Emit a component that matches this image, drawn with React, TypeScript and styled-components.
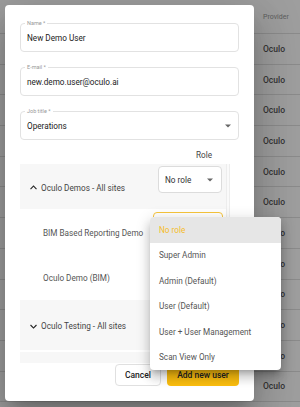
import styled, { createGlobalStyle } from 'styled-components';

const GlobalStyle = createGlobalStyle`
  html, body {
    margin: 0;
    padding: 0;
  }
  body {
    font-family: Roboto, "Liberation Sans", sans-serif;
    width: 300px;
    height: 407px;
    overflow: hidden;
  }
`;

const Screen = styled.div`
  position: relative;
  width: 300px;
  height: 407px;
  overflow: hidden;
  background: #fff;
`;

const TableRow = styled.div<{ $head?: boolean }>`
  height: ${(p) => (p.$head ? 34 : 30.7)}px;
  box-sizing: border-box;
  border-bottom: 1px solid #e0e0e0;
  display: flex;
  align-items: center;
  padding-left: 263px;
  font-size: ${(p) => (p.$head ? 7 : 8.5)}px;
  font-weight: ${(p) => (p.$head ? 400 : 500)};
  color: ${(p) => (p.$head ? '#999' : '#555')};
`;

const Backdrop = styled.div`
  position: absolute;
  inset: 0;
  background: rgba(0, 0, 0, 0.38);
`;

const Dialog = styled.div`
  position: absolute;
  left: 5px;
  top: 5px;
  width: 249px;
  height: 396px;
  box-sizing: border-box;
  background: #fff;
  border-radius: 4px;
  box-shadow: 0 11px 15px -7px rgba(0, 0, 0, 0.2), 0 24px 38px 3px rgba(0, 0, 0, 0.14),
    0 9px 46px 8px rgba(0, 0, 0, 0.12);
  padding: 18px 15px 15px 15px;
  display: flex;
  flex-direction: column;
`;

const Fields = styled.div`
  display: flex;
  flex-direction: column;
  gap: 15px;
`;

const Field = styled.div`
  position: relative;
  height: 29px;
  box-sizing: border-box;
  border: 1px solid #e2e2e2;
  border-radius: 4px;
  display: flex;
  align-items: center;
  justify-content: space-between;
  padding: 0 7px 0 6px;
  font-size: 8.2px;
  color: #222;
`;

const FieldLabel = styled.span`
  position: absolute;
  left: 4px;
  top: -4px;
  padding: 0 2px;
  background: #fff;
  font-size: 5.5px;
  line-height: 7px;
  color: #999;
`;

const RoleHead = styled.div`
  margin-top: 10px;
  height: 14px;
  display: flex;
  align-items: flex-start;
  justify-content: flex-end;
  padding-right: 27px;
  font-size: 8.2px;
  color: #444;
`;

const ScrollArea = styled.div`
  height: 199px;
  display: flex;
  overflow: hidden;
`;

const ScrollContent = styled.div`
  width: 206px;
  display: flex;
  flex-direction: column;
`;

const Scrollbar = styled.div`
  width: 4px;
  box-sizing: border-box;
  border-left: 1px solid #ededed;
  border-right: 1px solid #ededed;
  background: #fafafa;
`;

const GroupHeader = styled.div<{ $h: number; $gap?: number }>`
  height: ${(p) => p.$h}px;
  flex-shrink: 0;
  margin-top: ${(p) => p.$gap ?? 0}px;
  background: #f7f7f7;
  display: flex;
  align-items: flex-start;
  justify-content: space-between;
  padding: 2px 4px 0 9px;
  box-sizing: border-box;
`;

const GroupTitle = styled.div<{ $h: number }>`
  height: ${(p) => p.$h - 2}px;
  display: flex;
  align-items: center;
  gap: 3px;
  font-size: 8.2px;
  color: #444;
`;

const SiteRow = styled.div`
  height: 45px;
  flex-shrink: 0;
  display: flex;
  align-items: flex-start;
  justify-content: space-between;
  padding: 3px 3px 0 23px;
  box-sizing: border-box;
`;

const SiteName = styled.div`
  height: 42px;
  display: flex;
  align-items: center;
  font-size: 8.2px;
  color: #555;
`;

const RoleSelect = styled.div<{ $w: number; $focused?: boolean }>`
  width: ${(p) => p.$w}px;
  height: 27px;
  box-sizing: border-box;
  background: #fff;
  border: ${(p) => (p.$focused ? '1.5px solid #f7c53c' : '1px solid #dcdcdc')};
  border-radius: 4px;
  display: flex;
  align-items: center;
  justify-content: space-between;
  padding: 0 8px 0 6px;
  font-size: 8.2px;
  color: #333;
`;

const Actions = styled.div`
  margin-top: 1px;
  display: flex;
  justify-content: flex-end;
  gap: 6px;
`;

const Button = styled.button<{ $primary?: boolean }>`
  height: 22px;
  width: ${(p) => (p.$primary ? 72 : 46)}px;
  border-radius: 4px;
  border: ${(p) => (p.$primary ? 'none' : '1px solid #e0e0e0')};
  background: ${(p) => (p.$primary ? '#fbbe0f' : '#fff')};
  font-family: inherit;
  font-size: 8.5px;
  font-weight: 500;
  color: #222;
  padding: 0;
`;

const Menu = styled.div`
  position: absolute;
  left: 150px;
  top: 217px;
  width: 131px;
  background: #fff;
  border-radius: 4px;
  box-shadow: 0 5px 5px -3px rgba(0, 0, 0, 0.2), 0 8px 10px 1px rgba(0, 0, 0, 0.14),
    0 3px 14px 2px rgba(0, 0, 0, 0.12);
  overflow: hidden;
`;

const MenuItem = styled.div<{ $selected?: boolean }>`
  height: 25.5px;
  display: flex;
  align-items: center;
  padding-left: 9px;
  font-size: 8.2px;
  background: ${(p) => (p.$selected ? '#e6e6e6' : 'transparent')};
  color: ${(p) => (p.$selected ? '#f5bd2a' : '#555')};
`;

const ArrowDown = () => (
  <svg width="6" height="4" viewBox="7 10 10 5">
    <path d="M7 10l5 5 5-5z" fill="#666" />
  </svg>
);

const Chevron = ({ up }: { up?: boolean }) => (
  <svg width="9" height="9" viewBox="4 4 16 16">
    <path
      d={up ? 'M12 8l-6 6 1.41 1.41L12 10.83l4.59 4.58L18 14z' : 'M16.59 8.59L12 13.17 7.41 8.59 6 10l6 6 6-6z'}
      fill="#222"
    />
  </svg>
);

const providers = Array.from({ length: 12 }, () => 'Oculo');
const roles = ['No role', 'Super Admin', 'Admin (Default)', 'User (Default)', 'User + User Management', 'Scan View Only'];

export default function App() {
  return (
    <Screen>
      <GlobalStyle />
      <TableRow $head>Provider</TableRow>
      {providers.map((p, i) => (
        <TableRow key={i}>{p}</TableRow>
      ))}
      <Backdrop />
      <Dialog>
        <Fields>
          <Field>
            <FieldLabel>Name *</FieldLabel>
            New Demo User
          </Field>
          <Field>
            <FieldLabel>E-mail *</FieldLabel>
            new.demo.user@oculo.ai
          </Field>
          <Field>
            <FieldLabel>Job title *</FieldLabel>
            Operations
            <ArrowDown />
          </Field>
        </Fields>
        <RoleHead>Role</RoleHead>
        <ScrollArea>
          <ScrollContent>
            <GroupHeader $h={45}>
              <GroupTitle $h={45}>
                <Chevron up />
                Oculo Demos - All sites
              </GroupTitle>
              <RoleSelect $w={64}>
                No role
                <ArrowDown />
              </RoleSelect>
            </GroupHeader>
            <SiteRow>
              <SiteName>BIM Based Reporting Demo</SiteName>
              {/* the open menu lies over this select */}
              <RoleSelect $w={70} $focused />
            </SiteRow>
            <SiteRow>
              <SiteName>Oculo Demo (BIM)</SiteName>
              <RoleSelect $w={70} />
            </SiteRow>
            <GroupHeader $h={50} $gap={1}>
              <GroupTitle $h={50}>
                <Chevron />
                Oculo Testing - All sites
              </GroupTitle>
            </GroupHeader>
            <GroupHeader $h={20} $gap={2} />
          </ScrollContent>
          <Scrollbar />
        </ScrollArea>
        <Actions>
          <Button>Cancel</Button>
          <Button $primary>Add new user</Button>
        </Actions>
      </Dialog>
      <Menu>
        {roles.map((r, i) => (
          <MenuItem key={r} $selected={i === 0}>
            {r}
          </MenuItem>
        ))}
      </Menu>
    </Screen>
  );
}
